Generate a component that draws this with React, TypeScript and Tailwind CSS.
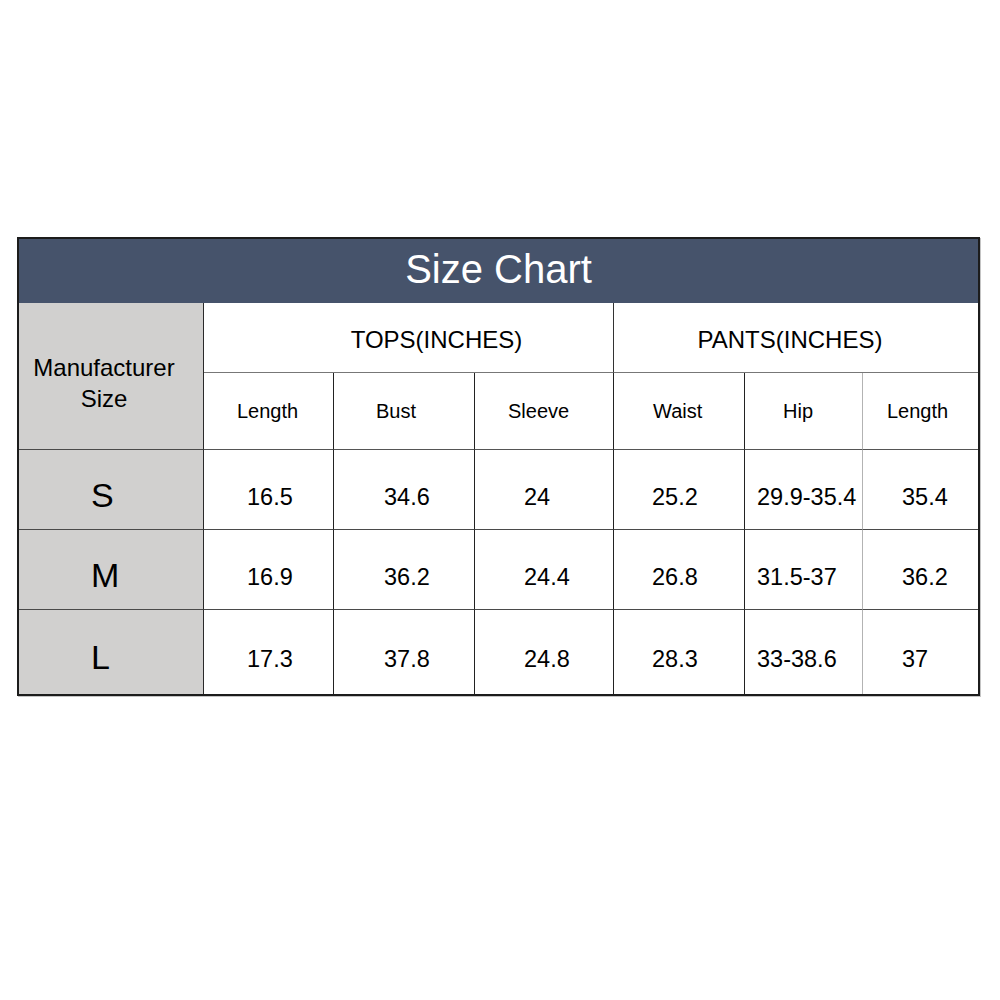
const rows = [
  { size: 'S', values: ['16.5', '34.6', '24', '25.2', '29.9-35.4', '35.4'] },
  { size: 'M', values: ['16.9', '36.2', '24.4', '26.8', '31.5-37', '36.2'] },
  { size: 'L', values: ['17.3', '37.8', '24.8', '28.3', '33-38.6', '37'] },
];

const headers = ['Length', 'Bust', 'Sleeve', 'Waist', 'Hip', 'Length'];

// left padding per column, so labels and values sit where the chart puts them
const headerPad = ['pl-[33px]', 'pl-[42px]', 'pl-[33px]', 'pl-[39px]', 'pl-[38px]', 'pl-[24px]'];
const valuePad = ['pl-[43px]', 'pl-[50px]', 'pl-[49px]', 'pl-[38px]', 'pl-[12px]', 'pl-[39px]'];
const rowHeights = ['h-[80px]', 'h-[80px]', 'h-[84px]'];

function sideLine(i: number) {
  if (i === 4) return 'border-r border-r-[#b3b3b3]';
  if (i < 5) return 'border-r border-r-[#222]';
  return '';
}

export default function App() {
  return (
    <div className="w-[1000px] h-[1000px] bg-white pt-[237px] pl-[17px] font-['Liberation_Sans',Arial,sans-serif] text-black">
      <div className="w-[963px] border-2 border-[#1c1c1c] shadow-[1px_1px_0_#c4c4c4]">
        <div className="h-[64px] bg-[#46536b] flex items-center justify-center pb-[4px]">
          <span className="text-[40px] leading-none text-white">Size Chart</span>
        </div>

        <div className="grid grid-cols-[185px_130px_141px_139px_131px_118px_1fr]">
          {/* Manufacturer size header */}
          <div className="row-span-2 bg-[#d1d0cf] border-r border-b border-r-[#2a2a2a] border-b-[#4a4a4a] flex flex-col items-center justify-center pt-[13px] pr-[14px] text-[24px] leading-[31px]">
            <span>Manufacturer</span>
            <span>Size</span>
          </div>
          <div className="col-span-3 h-[70px] border-r border-b border-r-[#333] border-b-[#777] flex items-center justify-center pl-[56px] pt-[4px] text-[24px]">
            TOPS(INCHES)
          </div>
          <div className="col-span-3 h-[70px] border-b border-b-[#777] flex items-center justify-center pr-[12px] pt-[4px] text-[24px]">
            PANTS(INCHES)
          </div>

          {headers.map((h, i) => (
            <div key={i} className={`h-[77px] border-b border-b-[#555] flex items-center ${headerPad[i]} text-[20px] ${sideLine(i)}`}>
              {h}
            </div>
          ))}

          {rows.map((r, ri) => (
            <Row key={r.size} size={r.size} values={r.values} height={rowHeights[ri]} last={ri === rows.length - 1} />
          ))}
        </div>
      </div>
    </div>
  );
}

function Row({ size, values, height, last }: { size: string; values: string[]; height: string; last: boolean }) {
  const bottom = last ? '' : 'border-b border-b-[#4a4a4a]';
  return (
    <>
      <div className={`${height} ${bottom} bg-[#d1d0cf] border-r border-r-[#2a2a2a] flex items-center pl-[72px] pt-[10px] text-[34px] leading-none`}>
        {size}
      </div>
      {values.map((v, i) => (
        <div key={i} className={`${height} ${bottom} ${valuePad[i]} flex items-center pt-[16px] text-[23.5px] leading-none ${sideLine(i)}`}>
          {v}
        </div>
      ))}
    </>
  );
}
